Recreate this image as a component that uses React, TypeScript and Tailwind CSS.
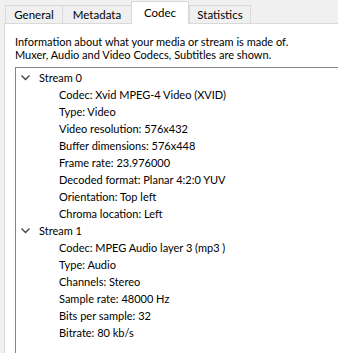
import React from 'react';

interface Stream {
  name: string;
  props: string[];
}

const streams: Stream[] = [
  {
    name: 'Stream 0',
    props: [
      'Codec: Xvid MPEG-4 Video (XVID)',
      'Type: Video',
      'Video resolution: 576x432',
      'Buffer dimensions: 576x448',
      'Frame rate: 23.976000',
      'Decoded format: Planar 4:2:0 YUV',
      'Orientation: Top left',
      'Chroma location: Left',
    ],
  },
  {
    name: 'Stream 1',
    props: [
      'Codec: MPEG Audio layer 3 (mp3 )',
      'Type: Audio',
      'Channels: Stereo',
      'Sample rate: 48000 Hz',
      'Bits per sample: 32',
      'Bitrate: 80 kb/s',
    ],
  },
];

const tabs = [
  { label: 'General', w: 'w-[58px]' },
  { label: 'Metadata', w: 'w-[70px]' },
  { label: 'Codec', w: 'w-[58px]' },
  { label: 'Statistics', w: 'w-[62px]' },
];

const Chevron = () => (
  <svg width="9" height="6" viewBox="0 0 9 6" className="shrink-0">
    <path d="M0.5 0.5 L4.5 4.5 L8.5 0.5" fill="none" stroke="#404040" strokeWidth="1.3" />
  </svg>
);

const App = () => {
  const active = 'Codec';

  return (
    <div className="w-[338px] h-[353px] overflow-hidden bg-[#f0f0f0] flex flex-col text-[11px] leading-[13px] text-black font-['Lato',sans-serif]">
      <div className="flex items-end h-[23px] shrink-0 pl-[5px] relative z-10">
        {tabs.map((t) =>
          t.label === active ? (
            <div
              key={t.label}
              className={`${t.w} h-[23px] -mb-px bg-white border border-b-0 border-[#d9d9d9] flex items-center justify-center pb-[2px] text-[11.5px]`}
            >
              {t.label}
            </div>
          ) : (
            <div
              key={t.label}
              className={`${t.w} h-[18px] bg-[#f0f0f0] border border-b-0 border-[#d9d9d9] -mr-px flex items-center justify-center text-[11.5px]`}
            >
              {t.label}
            </div>
          )
        )}
      </div>

      <div className="flex-1 ml-[4px] bg-white border-t border-l border-[#d9d9d9] flex flex-col">
        <div className="pl-[10px] pt-[11px] whitespace-nowrap">
          <p className="h-[13px]">Information about what your media or stream is made of.</p>
          <p className="h-[13px]">Muxer, Audio and Video Codecs, Subtitles are shown.</p>
        </div>

        <div className="flex-1 ml-[10px] mt-[6px] border-t border-l border-[#828790] pt-px">
          {streams.map((s) => (
            <div key={s.name}>
              <div className="flex items-center h-[17px] pl-[5px] gap-[9px]">
                <Chevron />
                <span>{s.name}</span>
              </div>
              {s.props.map((p) => (
                <div key={p} className="h-[17px] flex items-center pl-[43px] whitespace-nowrap">
                  {p}
                </div>
              ))}
            </div>
          ))}
        </div>
      </div>
    </div>
  );
};

export default App;
